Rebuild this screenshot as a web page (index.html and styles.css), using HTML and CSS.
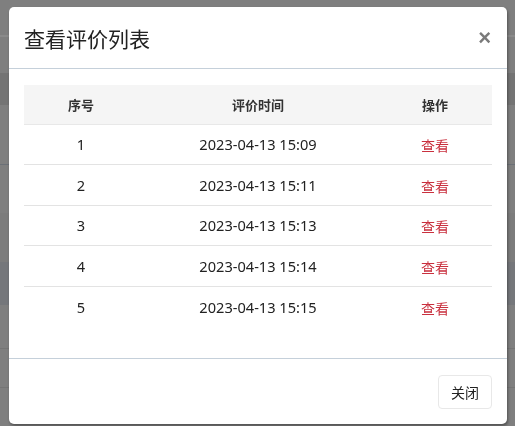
FILE: index.html
```html
<!DOCTYPE html>
<html lang="zh-CN">
<head>
  <meta charset="UTF-8">
  <meta name="viewport" content="width=device-width, initial-scale=1.0">
  <title>评价管理</title>
  <link rel="stylesheet" href="styles.css">
</head>
<body>

  <!-- page underneath the dialog, dimmed by the backdrop -->
  <div class="page">
    <div class="band" style="height: 35px"></div>
    <div class="band line-light" style="height: 2px"></div>
    <div class="band" style="height: 36px"></div>
    <div class="band dark" style="height: 32px"></div>
    <div class="band" style="height: 59px"></div>
    <div class="band line-dark" style="height: 1px"></div>
    <div class="band" style="height: 48px"></div>
    <div class="band soft" style="height: 49px"></div>
    <div class="band blue" style="height: 43px"></div>
    <div class="band" style="height: 43px"></div>
    <div class="band line-mid" style="height: 1px"></div>
    <div class="band" style="height: 38px"></div>
    <div class="band line-mid" style="height: 1px"></div>
    <div class="band" style="height: 38px"></div>
  </div>

  <div class="modal">
    <div class="modal-header">
      <h4 class="modal-title">查看评价列表</h4>
      <button class="close" type="button">&times;</button>
    </div>

    <div class="modal-body">
      <table class="table">
        <thead>
          <tr>
            <th class="col-no">序号</th>
            <th class="col-time">评价时间</th>
            <th class="col-op">操作</th>
          </tr>
        </thead>
        <tbody>
          <tr><td>1</td><td>2023-04-13 15:09</td><td><a href="#">查看</a></td></tr>
          <tr><td>2</td><td>2023-04-13 15:11</td><td><a href="#">查看</a></td></tr>
          <tr><td>3</td><td>2023-04-13 15:13</td><td><a href="#">查看</a></td></tr>
          <tr><td>4</td><td>2023-04-13 15:14</td><td><a href="#">查看</a></td></tr>
          <tr><td>5</td><td>2023-04-13 15:15</td><td><a href="#">查看</a></td></tr>
        </tbody>
      </table>
    </div>

    <div class="modal-footer">
      <button class="btn" type="button">关闭</button>
    </div>
  </div>

</body>
</html>
```

FILE: styles.css
```css
body {
  margin: 0;
  padding: 0;
  font-family: 'Noto Sans', 'Noto Sans CJK SC', sans-serif;
  background-color: #7f7f7f;
  color: #222;
  overflow: hidden;
}

.page {
  display: flex;
  flex-direction: column;
}

.band {
  background-color: #7f7f7f;
}

.band.line-light { background-color: #8a8a8a; }
.band.dark { background-color: #747474; }
.band.line-dark { background-color: #6b7077; }
.band.soft { background-color: #7c7c7c; }
.band.blue { background-color: #75777b; }
.band.line-mid { background-color: #757575; }

.modal {
  position: fixed;
  top: 7px;
  left: 9px;
  width: 498px;
  height: 417px;
  background-color: #fff;
  border-radius: 5px;
  box-shadow: 1px 2px 3px rgba(0, 0, 0, 0.35);
  display: flex;
  flex-direction: column;
}

.modal-header {
  display: flex;
  align-items: center;
  justify-content: space-between;
  height: 62px;
  padding: 0 15px;
  border-bottom: 1px solid #c5d0da;
  box-sizing: border-box;
}

.modal-title {
  margin: 0;
  font-size: 21px;
  font-weight: 400;
  color: #222;
}

.close {
  border: none;
  background: none;
  padding: 0;
  margin-right: 1px;
  font-family: 'Liberation Sans', sans-serif;
  font-size: 22px;
  font-weight: 700;
  color: #7a7a7a;
  cursor: pointer;
}

.modal-body {
  flex: 1;
  padding: 16px 15px;
}

.table {
  width: 468px;
  border-collapse: collapse;
  table-layout: fixed;
  font-size: 14.6px;
}

.table th,
.table td {
  padding: 0;
  text-align: center;
}

.table th {
  height: 38.5px;
  background-color: #f5f5f5;
  font-size: 13px;
  font-weight: 700;
  color: #333;
  border-bottom: 1px solid #e8e8e8;
}

.col-no { width: 114px; }
.col-time { width: 240px; }
.col-op { width: 114px; }

.table td {
  height: 39.6px;
  color: #222;
  border-top: 1px solid #e3e3e3;
}

.table tbody tr:first-child td {
  border-top: none;
}

.table a {
  color: #c9303e;
  text-decoration: none;
  font-family: 'Noto Sans CJK SC', sans-serif;
  font-size: 14px;
  position: relative;
  top: 1px;
}

.modal-footer {
  display: flex;
  justify-content: flex-end;
  height: 66px;
  padding: 0 15px;
  align-items: center;
  border-top: 1px solid #c5d0da;
  box-sizing: border-box;
}

.btn {
  width: 54px;
  height: 34px;
  border: 1px solid #e8e8e8;
  border-radius: 4px;
  background-color: #fff;
  font-family: 'Noto Sans CJK SC', sans-serif;
  font-size: 14px;
  color: #222;
  cursor: pointer;
}
```
